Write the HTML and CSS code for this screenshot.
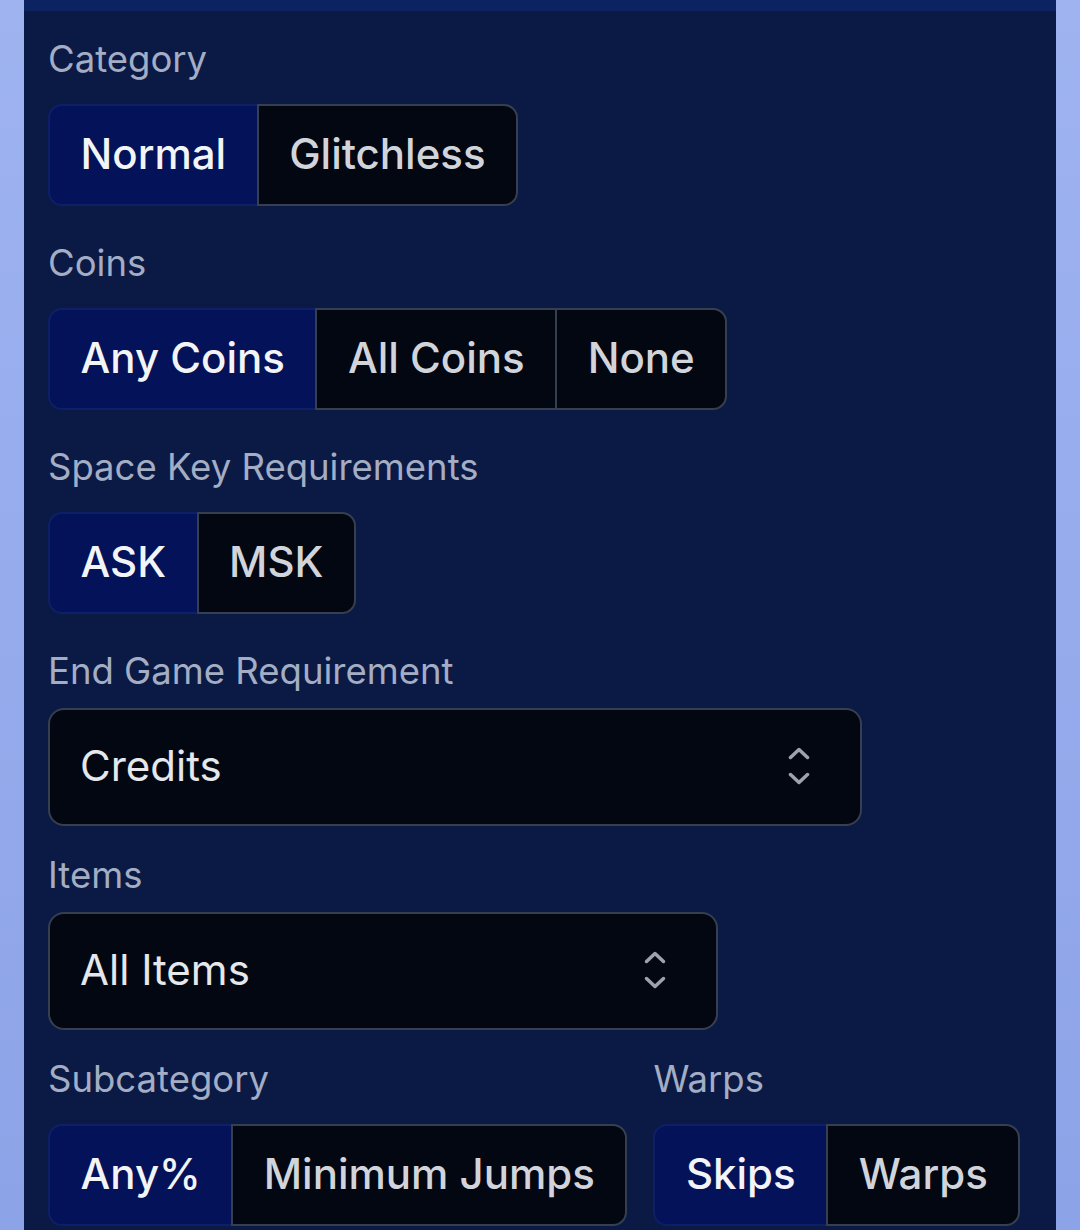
FILE: index.html
```html
<!DOCTYPE html>
<html lang="en">
<head>
<meta charset="utf-8">
<title>Run settings</title>
<link rel="stylesheet" href="styles.css">
</head>
<body>
<div class="panel">
  <div class="field">
    <div class="label">Category</div>
    <div class="row">
      <div class="seg">
        <span class="opt on">Normal</span><span class="opt">Glitchless</span>
      </div>
    </div>
  </div>
  <div class="field">
    <div class="label">Coins</div>
    <div class="row">
      <div class="seg">
        <span class="opt on">Any Coins</span><span class="opt">All Coins</span><span class="opt">None</span>
      </div>
    </div>
  </div>
  <div class="field">
    <div class="label">Space Key Requirements</div>
    <div class="row">
      <div class="seg">
        <span class="opt on">ASK</span><span class="opt">MSK</span>
      </div>
    </div>
  </div>
  <div class="field">
    <div class="label">End Game Requirement</div>
    <div class="row">
      <div class="select wide">
        <span>Credits</span>
        <svg class="chev" viewBox="0 0 24 40" width="24" height="40"><path d="M3.5 10.5 L12 2.5 L20.5 10.5 M3.5 27.5 L12 35.5 L20.5 27.5" fill="none" stroke="#9ca3af" stroke-width="3.5" stroke-linecap="round" stroke-linejoin="round"/></svg>
      </div>
    </div>
  </div>
  <div class="field">
    <div class="label">Items</div>
    <div class="row">
      <div class="select narrow">
        <span>All Items</span>
        <svg class="chev" viewBox="0 0 24 40" width="24" height="40"><path d="M3.5 10.5 L12 2.5 L20.5 10.5 M3.5 27.5 L12 35.5 L20.5 27.5" fill="none" stroke="#9ca3af" stroke-width="3.5" stroke-linecap="round" stroke-linejoin="round"/></svg>
      </div>
    </div>
  </div>
  <div class="pair">
    <div class="field">
      <div class="label">Subcategory</div>
      <div class="row">
        <div class="seg">
          <span class="opt on">Any%</span><span class="opt">Minimum Jumps</span>
        </div>
      </div>
    </div>
    <div class="field">
      <div class="label">Warps</div>
      <div class="row">
        <div class="seg">
          <span class="opt on">Skips</span><span class="opt">Warps</span>
        </div>
      </div>
    </div>
  </div>
</div>
</body>
</html>
```
FILE: styles.css
```css
html, body {
  margin: 0;
  padding: 0;
}
body {
  background: linear-gradient(180deg, #9fb3f1 0%, #8ca3e7 100%);
  font-family: Inter, "Liberation Sans", sans-serif;
  height: 1230px;
  overflow: hidden;
}
.panel {
  margin: 0 24px;
  background: #0b1a44;
  border-top: 11px solid #0d2260;
  min-height: 1230px;
  padding: 24px 24px 0;
  box-sizing: border-box;
}
.field {
  margin-bottom: 25px;
}
.label {
  font-size: 36.5px;
  line-height: 48px;
  color: #a3adc4;
  margin-bottom: 13px;
}
.row {
  height: 118px;
  display: flex;
  align-items: center;
}
.seg {
  display: inline-flex;
}
.opt {
  height: 102px;
  box-sizing: border-box;
  padding: 0 30.5px 3px;
  display: flex;
  align-items: center;
  font-size: 42px;
  font-weight: 500;
  color: #d1d5db;
  background: #030712;
  border: 2px solid #363f4f;
  margin-left: -2px;
}
.opt:first-child {
  margin-left: 0;
  border-radius: 14px 0 0 14px;
}
.opt:last-child {
  border-radius: 0 14px 14px 0;
}
.opt.on {
  background: #04125a;
  border-color: #0d1f66;
  color: #f3f4f6;
}
.select {
  height: 118px;
  box-sizing: border-box;
  border: 2px solid #363f4f;
  border-radius: 16px;
  background: #030712;
  display: flex;
  align-items: center;
  justify-content: space-between;
  padding: 0 49px 3px 30px;
  font-size: 42px;
  color: #e5e7eb;
}
.select.wide {
  width: 814px;
}
.select.narrow {
  width: 670px;
}
.chev {
  display: block;
  margin-top: 3px;
}
.pair {
  display: flex;
  gap: 26px;
}
```
